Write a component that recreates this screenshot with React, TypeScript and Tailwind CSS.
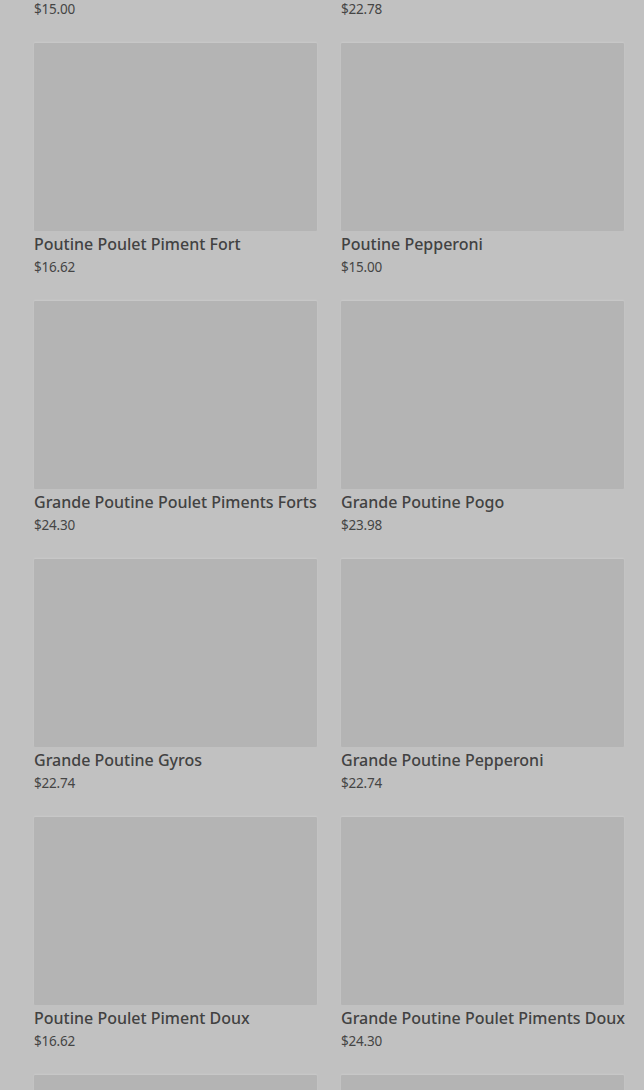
const items = [
  { name: "Poutine Poulet Piment Doux", price: "$15.00" },
  { name: "Grande Poutine Poulet Piments Doux", price: "$22.78" },
  { name: "Poutine Poulet Piment Fort", price: "$16.62" },
  { name: "Poutine Pepperoni", price: "$15.00" },
  { name: "Grande Poutine Poulet Piments Forts", price: "$24.30" },
  { name: "Grande Poutine Pogo", price: "$23.98" },
  { name: "Grande Poutine Gyros", price: "$22.74" },
  { name: "Grande Poutine Pepperoni", price: "$22.74" },
  { name: "Poutine Poulet Piment Doux", price: "$16.62" },
  { name: "Grande Poutine Poulet Piments Doux", price: "$24.30" },
  { name: "Poutine Gyros", price: "$15.00" },
  { name: "Poutine Pogo", price: "$15.00" },
]

export default function App() {
  return (
    <div className="h-[1090px] overflow-hidden bg-[#c1c1c1] font-['Noto_Sans',sans-serif]">
      <div className="mt-[-215px] grid grid-cols-2 gap-x-6 gap-y-[26px] pl-[34px] pr-5">
        {items.map((it, i) => (
          <div key={i} className="flex flex-col">
            <div className="h-[188px] rounded-[1px] bg-[#b4b4b4] shadow-[0_-1px_2px_rgba(255,255,255,0.15)]" />
            <div className="mt-[3px] text-[16px] font-medium leading-[20px] text-[#424242] whitespace-nowrap">
              {it.name}
            </div>
            <div className="mt-[5px] text-[13.5px] leading-[16px] tracking-[-0.2px] text-[#454545]">{it.price}</div>
          </div>
        ))}
      </div>
    </div>
  )
}
